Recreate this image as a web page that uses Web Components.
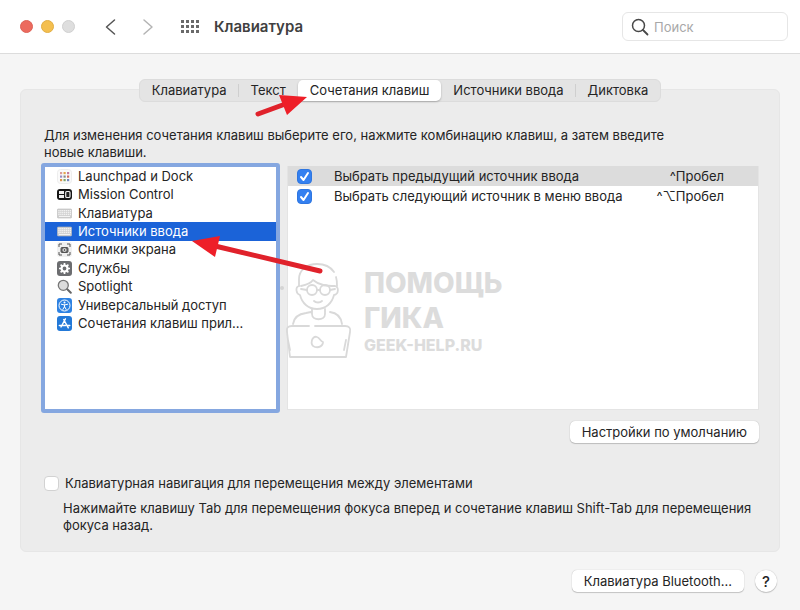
<!DOCTYPE html>
<html lang="ru">
<head>
<meta charset="utf-8">
<meta name="viewport" content="width=device-width, initial-scale=1">
<title>Клавиатура</title>
<style>
  body {
    margin: 0;
    min-height: 100vh;
    background: #f5f5f5;
    color: #242424;
    font: 13px/17px Inter, "Liberation Sans", sans-serif;
  }
</style>
</head>
<body>
<keyboard-prefs></keyboard-prefs>

<template id="window-toolbar">
  <style>
    :host {
      display: flex;
      align-items: center;
      box-sizing: border-box;
      height: 54px;
      padding: 0 12px 0 20px;
      background: #fff;
      border-bottom: 1px solid #dcdcdc;
    }
    .lights { display: flex; gap: 8px; margin-right: 26px; }
    .lights i { box-sizing: border-box; width: 13px; height: 13px; border-radius: 50%; background: #ec6a5e; border: 1px solid #dd6257; }
    .lights i:nth-child(2) { background: #f4bf4f; border-color: #e2ae43; }
    .lights i:nth-child(3) { background: #dedede; border-color: #d0d0d0; }
    button { border: 0; padding: 0; background: none; display: flex; cursor: pointer; }
    .nav { display: flex; gap: 17px; margin-right: 22px; }
    h1 { margin: 0 auto 0 14px; font-size: 15px; line-height: 20px; font-weight: 600; color: #404040; }
    .search {
      display: flex;
      align-items: center;
      gap: 5px;
      box-sizing: border-box;
      width: 166px;
      height: 29px;
      padding: 0 8px;
      border: 1px solid #e6e6e6;
      border-radius: 6px;
    }
    input { flex: 1; min-width: 0; border: 0; padding: 1px 0 0; outline: 0; background: none; font: inherit; color: inherit; }
    input::placeholder { color: #a8a8a8; opacity: 1; }
  </style>
  <div class="lights"><i></i><i></i><i></i></div>
  <div class="nav">
    <button aria-label="Назад"><svg width="20" height="20" fill="none" stroke="#555" stroke-width="1.5" stroke-linecap="round" stroke-linejoin="round"><path d="M13.500 3 5.500 10l8 7"/></svg></button>
    <button aria-label="Вперёд"><svg width="20" height="20" fill="none" stroke="#b4b4b4" stroke-width="1.500" stroke-linecap="round" stroke-linejoin="round"><path d="M6 3 14 10l-8 7"/></svg></button>
  </div>
  <button aria-label="Показать все"><svg id="dots" width="20" height="14" fill="#6a6a6a"></svg></button>
  <h1>Клавиатура</h1>
  <label class="search">
    <svg width="18" height="18" fill="none" stroke="#484848" stroke-width="1.5" stroke-linecap="round"><circle cx="7.500" cy="7.500" r="6"/><path d="m12 12 4.500 4.500" stroke-width="1.800"/></svg>
    <input type="text" placeholder="Поиск" aria-label="Поиск">
  </label>
</template>

<template id="tab-strip">
  <style>
    :host {
      display: flex;
      width: max-content;
      margin: 0 auto;
      box-sizing: border-box;
      height: 23px;
      border-radius: 6px;
      background: #e4e4e4;
      border: 1px solid #dcdcdc;
      position: relative;
    }
    button {
      border: 0;
      padding: 0 12px;
      background: none;
      color: inherit;
      font: inherit;
      white-space: nowrap;
      position: relative;
    }
    button.line::after {
      content: "";
      position: absolute;
      right: 0;
      top: 4px;
      bottom: 4px;
      width: 1px;
      background: #cfcfcf;
    }
    button[aria-selected="true"] {
      border-radius: 5px;
      background: #fff;
      box-shadow: 0 1px 2px rgba(0, 0, 0, 0.25);
    }
  </style>
  <button role="tab" class="line">Клавиатура</button>
  <button role="tab">Текст</button>
  <button role="tab" aria-selected="true">Сочетания клавиш</button>
  <button role="tab" class="line">Источники ввода</button>
  <button role="tab">Диктовка</button>
</template>

<template id="category-list">
  <style>
    :host {
      display: block;
      box-sizing: border-box;
      border: 4px solid #85a7e0;
      border-radius: 3px;
      background: #fff;
    }
    ul { list-style: none; margin: 0; padding: 0; display: grid; grid-auto-rows: 1fr; height: 166px; }
  </style>
  <ul><slot></slot></ul>
</template>

<template id="category-item">
  <style>
    :host { display: grid; }
    button {
      display: flex;
      align-items: center;
      gap: 6px;
      min-width: 0;
      border: 0;
      padding: 0 12px;
      background: none;
      color: inherit;
      font: inherit;
      text-align: left;
    }
    svg { flex: none; }
    span { overflow: hidden; white-space: nowrap; text-overflow: ellipsis; }
    :host([selected]) button { background: #1b63d8; color: #fff; }
  </style>
  <button><svg width="15" height="15" viewBox="0 0 15 15"></svg><span><slot></slot></span></button>
</template>

<template id="shortcut-table">
  <style>
    :host { display: block; background: #fff; border: 1px solid #e4e4e4; border-top: 0; box-sizing: border-box; }
    table { width: 100%; border-collapse: collapse; }
    tr { height: 20px; }
    tr.current { background: #dcdcdc; }
    td { padding: 0; white-space: nowrap; }
    td:first-child { width: 46px; padding-left: 9px; box-sizing: border-box; }
    td:last-child { text-align: right; padding-right: 34px; }
  </style>
  <table>
    <tr class="current">
      <td><check-box checked name="Выбрать предыдущий источник ввода"></check-box></td>
      <td>Выбрать предыдущий источник ввода</td>
      <td>^Пробел</td>
    </tr>
    <tr>
      <td><check-box checked name="Выбрать следующий источник в меню ввода"></check-box></td>
      <td>Выбрать следующий источник в меню ввода</td>
      <td>^⌥Пробел</td>
    </tr>
  </table>
</template>

<template id="check-box">
  <style>
    :host { display: block; }
    label { display: flex; align-items: center; gap: 6px; }
    .box { display: grid; flex: none; }
    .box > * { grid-area: 1 / 1; }
    input {
      appearance: none;
      margin: 0;
      width: 15px;
      height: 15px;
      border-radius: 4px;
      background: #fff;
      border: 1px solid #d2d2d2;
    }
    input:checked { background: #3480f0; border-color: #2f76e0; }
    svg { display: none; pointer-events: none; }
    input:checked + svg { display: block; }
  </style>
  <label>
    <span class="box">
      <input type="checkbox">
      <svg width="15" height="15" fill="none" stroke="#fff" stroke-width="2" stroke-linecap="round" stroke-linejoin="round"><path d="m4 8 2.500 3L11 4"/></svg>
    </span>
    <slot></slot>
  </label>
</template>

<template id="push-button">
  <style>
    :host { display: block; }
    button {
      display: block;
      box-sizing: border-box;
      height: 22px;
      padding: 0 12px;
      border: 0;
      border-radius: 5px;
      background: #fff;
      box-shadow: 0 0 1px rgba(0, 0, 0, 0.3), 0 1px 1px rgba(0, 0, 0, 0.18);
      color: inherit;
      font: inherit;
      white-space: nowrap;
    }
    :host([round]) button { width: 22px; padding: 0; border-radius: 50%; font-size: 15px; font-weight: 500; }
  </style>
  <button><slot></slot></button>
</template>

<template id="page-marks">
  <style>
    :host { position: absolute; left: 0; top: 0; pointer-events: none; }
    svg { display: block; }
    .brand { font-family: Inter, sans-serif; font-weight: 800; fill: #dcdcdc; }
  </style>
  <svg width="560" height="370" fill="none">
    <circle cx="282" cy="288" r="2" fill="#d4d4d4"/>
    <g transform="translate(-1 1)" stroke="#d9d9d9" stroke-width="1.800" stroke-linecap="round" stroke-linejoin="round">
      <path d="M300 285v-7c0-9 8-15 18-15 7 0 13 2 17 8M337 276c1 3 1 6 1 9"/>
      <path d="M302 285c5-1 10-3 12-6 7 6 15 6 22 6M300 285c-4 1-3 8 1 9 2 8 8 14 17 14s15-6 17-14c5-1 5-8 1-9"/>
      <circle cx="313" cy="289" r="5"/><circle cx="326" cy="289" r="5"/>
      <path d="M318 289h3M302 288l6 1M331 289l5-1M315 300c2 2 6 2 8 0"/>
      <path d="M313 308v5c0 7 13 7 13 0v-5M294 323c1-7 5-10 13-11l5-1M331 311c8 1 11 5 12 12"/>
      <path d="M310 325h-17c-4 0-6 2-5 6l3 25h56l4-25c1-4-1-6-5-6h-30M289 339l2 10M347 339l-2 10"/>
      <path d="M318 336c-5-2-8 8-2 10 4 1 8-1 8-5-3-1-3-4-6-5Z"/>
    </g>
    <text class="brand" x="364" y="293" font-size="28">ПОМОЩЬ</text>
    <text class="brand" x="364" y="328" font-size="28">ГИКА</text>
    <text class="brand" x="364" y="351" font-size="16">GEEK-HELP.RU</text>
    <g stroke="#e0222b" stroke-width="5" stroke-linecap="round">
      <path d="m258 114 30-11M320 271 215 246"/>
      <path d="m307 97-28-2 8 20ZM192 241l28-5-5 21Z" fill="#ee1f28" stroke="none"/>
    </g>
  </svg>
</template>

<template id="keyboard-prefs">
  <style>
    :host { display: block; position: relative; }
    main { padding: 25px 20px 0; }
    .panel {
      box-sizing: border-box;
      margin-top: -13px;
      padding: 37px 20px 17px 20px;
      border: 1px solid #e6e6e6;
      border-radius: 6px;
      background: #ececec;
    }
    p { margin: 0; }
    .intro { padding: 0 60px 0 3px; }
    .columns { display: grid; grid-template-columns: 239px 1fr; gap: 7px; margin-top: 2px; }
    category-list { height: 250px; }
    shortcut-table { margin: 3px 0; }
    .reset { display: flex; justify-content: flex-end; margin: 8px 0 32px; }
    .panel > check-box { margin-left: 3px; }
    .hint { margin: 8px 0 0 22px; }
    footer { display: flex; justify-content: flex-end; gap: 11px; padding: 18px 23px 18px; }
  </style>
  <window-toolbar></window-toolbar>
  <main>
    <tab-strip role="tablist"></tab-strip>
    <section class="panel">
      <p class="intro">Для изменения сочетания клавиш выберите его, нажмите комбинацию клавиш, а затем введите новые клавиши.</p>
      <div class="columns">
        <category-list>
          <category-item icon="launchpad">Launchpad и Dock</category-item>
          <category-item icon="mission">Mission Control</category-item>
          <category-item icon="keyboard">Клавиатура</category-item>
          <category-item icon="keyboard" selected>Источники ввода</category-item>
          <category-item icon="screenshot">Снимки экрана</category-item>
          <category-item icon="gear">Службы</category-item>
          <category-item icon="spotlight">Spotlight</category-item>
          <category-item icon="access">Универсальный доступ</category-item>
          <category-item icon="apps">Сочетания клавиш прил...</category-item>
        </category-list>
        <shortcut-table></shortcut-table>
      </div>
      <div class="reset"><push-button>Настройки по умолчанию</push-button></div>
      <check-box>Клавиатурная навигация для перемещения между элементами</check-box>
      <p class="hint">Нажимайте клавишу Tab для перемещения фокуса вперед и сочетание клавиш Shift-Tab для перемещения фокуса назад.</p>
    </section>
  </main>
  <footer>
    <push-button>Клавиатура Bluetooth...</push-button>
    <push-button round>?</push-button>
  </footer>
  <page-marks></page-marks>
</template>

<script>
  // Grid of small squares, used by the toolbar, Launchpad and keyboard glyphs
  function squares(cols, rows, x, y, step, size, colors) {
    let out = '';
    for (let r = 0; r < rows; r++) {
      for (let c = 0; c < cols; c++) {
        const fill = colors ? ` fill="${colors[(r * cols + c) % colors.length]}"` : '';
        out += `<rect x="${x + c * step}" y="${y + r * step}" width="${size}" height="${size}"${fill}/>`;
      }
    }
    return out;
  }

  const icons = {
    launchpad: '<rect x=".5" y=".5" width="14" height="14" rx="3" fill="#fafafa" stroke="#ededed"/>' +
      squares(3, 3, 3, 3, 3.500, 2.200, ['#d99a9a', '#e3a54b', '#c27ba0', '#9a8cc4', '#888', '#cf6b5b', '#e0954a', '#7fa66a', '#7286bf']),
    mission: '<rect y="2" width="15" height="11" rx="3" fill="#151515"/><path d="M2 4h5v3H2zM2 8h5v3H2z" fill="#eee"/><rect x="8.700" y="4.500" width="4.300" height="6" rx="1" fill="#222" stroke="#eee" stroke-width="1.200"/>',
    keyboard: '<rect x=".3" y="3" width="14.400" height="9" rx="1" fill="#d0d0d0" stroke="#b9b9b9" stroke-width=".6"/>' +
      squares(7, 3, 1.300, 4, 1.900, 1.300, ['#f1f1f1']) + '<path d="M2 10.500h11" stroke="#f3f3f3"/>',
    screenshot: '<rect width="15" height="15" rx="3" fill="#f0f0f0"/><g fill="none" stroke="#555" stroke-width="1"><path d="M2 5V2h3M10 2h3v3M13 10v3h-3M5 13H2v-3"/><rect x="4" y="5.500" width="7" height="5" rx="1" fill="#666"/><circle cx="7.500" cy="8" r="1.500" stroke="#eee"/></g>',
    gear: '<rect width="15" height="15" rx="3" fill="#6c6d70"/><circle cx="7.500" cy="7.500" r="3" fill="none" stroke="#fff" stroke-width="2.200"/><path d="M7.500 2v2M7.500 11v2M2 7.500h2M11 7.500h2M3.600 3.600 5 5M10 10l1.400 1.400M11.400 3.600 10 5M5 10l-1.400 1.400" stroke="#fff" stroke-width="1.700"/>',
    spotlight: '<circle cx="6.300" cy="6.300" r="5" fill="#dcdcdc" stroke="#777" stroke-width="1.300"/><path d="m10.300 10.300 3.500 3.500" stroke="#666" stroke-width="2" stroke-linecap="round"/>',
    access: '<rect width="15" height="15" rx="3" fill="#2e82e2"/><circle cx="7.500" cy="7.500" r="5.500" fill="none" stroke="#fff"/><circle cx="7.500" cy="4.400" r="1" fill="#fff"/><path d="M4.300 6.200 7.500 7l3.200-.8M7.500 6.800V9M5.800 11.500 7.500 8.600l1.700 2.900" fill="none" stroke="#fff" stroke-linecap="round"/>',
    apps: '<rect width="15" height="15" rx="3" fill="#2379d8"/><path d="M8.400 2.800 4 11M6.700 3.500l4.600 8.300M2.300 9.500h6.200M10.600 9.500h2.200" fill="none" stroke="#fff" stroke-width="1.400" stroke-linecap="round"/>'
  };

  class PrefsElement extends HTMLElement {
    constructor() {
      super();
      this.attachShadow({ mode: 'open' });
      const template = document.getElementById(this.localName);
      this.shadowRoot.appendChild(template.content.cloneNode(true));
    }
  }

  class WindowToolbar extends PrefsElement {
    connectedCallback() {
      this.shadowRoot.getElementById('dots').innerHTML = squares(4, 3, 1, 0, 5, 3);
    }
  }

  class CategoryItem extends PrefsElement {
    connectedCallback() {
      this.setAttribute('role', 'listitem');
      this.shadowRoot.querySelector('svg').innerHTML = icons[this.getAttribute('icon')] || '';
    }
  }

  class CheckBox extends PrefsElement {
    connectedCallback() {
      const input = this.shadowRoot.querySelector('input');
      input.checked = this.hasAttribute('checked');
      // Table rows have their text in another cell
      if (this.hasAttribute('name')) input.setAttribute('aria-label', this.getAttribute('name'));
    }
  }

  class PushButton extends PrefsElement {
    connectedCallback() {
      if (this.hasAttribute('round')) {
        this.shadowRoot.querySelector('button').setAttribute('aria-label', 'Справка');
      }
    }
  }

  customElements.define('window-toolbar', WindowToolbar);
  customElements.define('tab-strip', class extends PrefsElement {});
  customElements.define('category-list', class extends PrefsElement {});
  customElements.define('category-item', CategoryItem);
  customElements.define('check-box', CheckBox);
  customElements.define('push-button', PushButton);
  customElements.define('shortcut-table', class extends PrefsElement {});
  customElements.define('page-marks', class extends PrefsElement {});
  customElements.define('keyboard-prefs', class extends PrefsElement {});
</script>
</body>
</html>
